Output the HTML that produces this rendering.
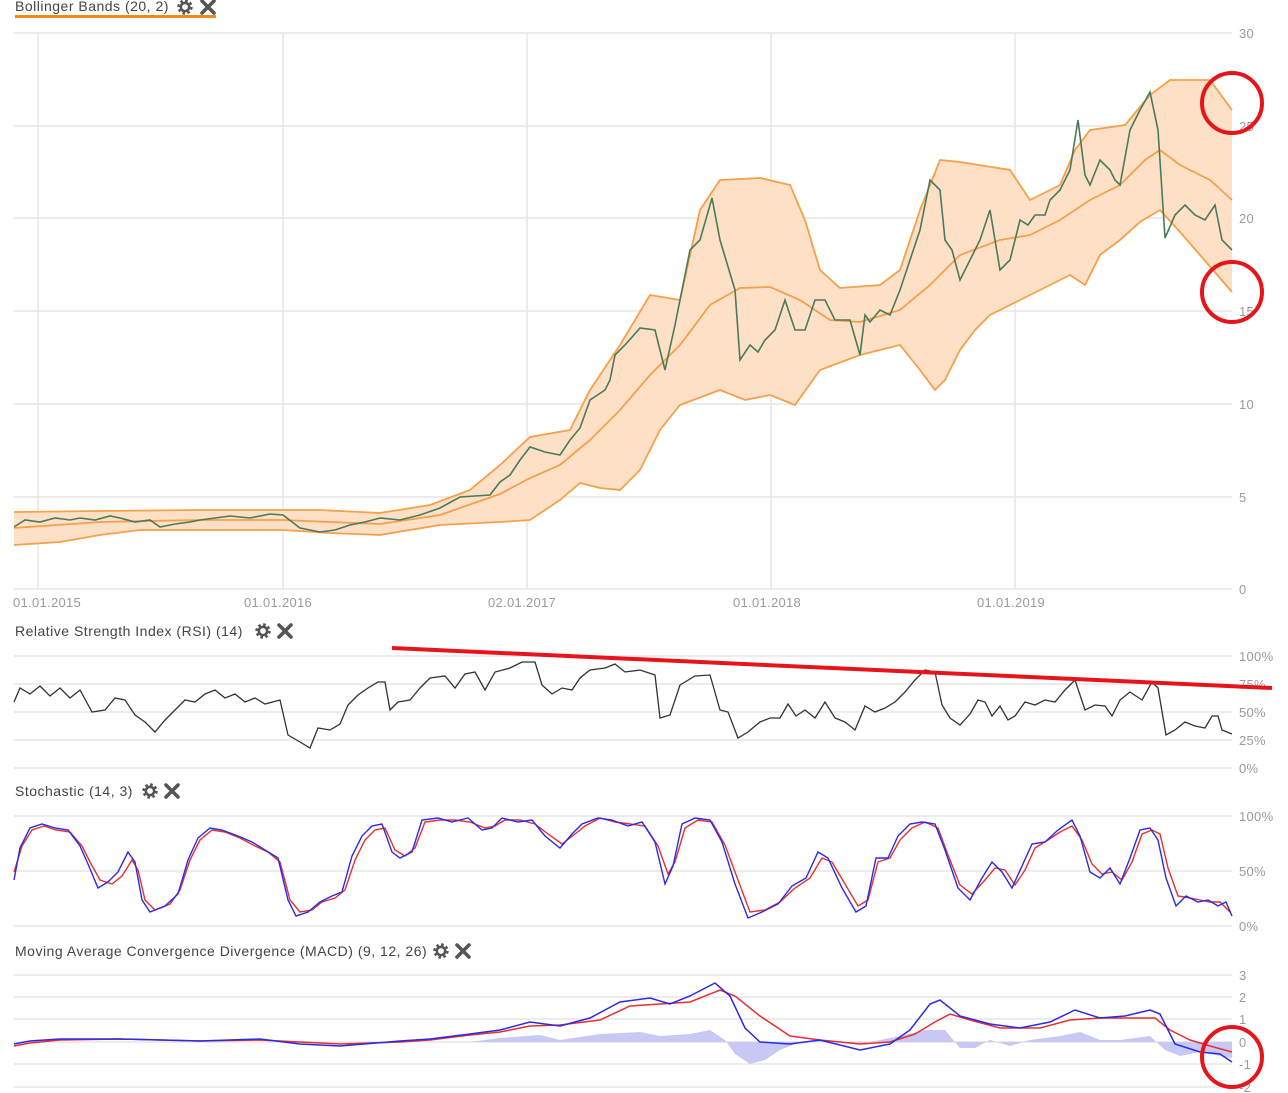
<!DOCTYPE html>
<html><head><meta charset="utf-8"><style>
body{margin:0;background:#fff;width:1288px;height:1093px;overflow:hidden;font-family:"Liberation Sans","DejaVu Sans",sans-serif}
svg{position:absolute;left:0;top:0}
</style></head><body>
<svg width="1288" height="1093" viewBox="0 0 1288 1093" font-family="Liberation Sans, DejaVu Sans, sans-serif">
<defs>
<g id="gear"><circle cx="0" cy="0" r="6" fill="none" stroke="#555" stroke-width="3.4" stroke-dasharray="2.4 2.3"/><circle cx="0" cy="0" r="4.2" fill="none" stroke="#555" stroke-width="2.6"/></g>
<g id="xx"><path d="M-6,-6 L6,6 M6,-6 L-6,6" stroke="#555" stroke-width="3.6" stroke-linecap="round"/></g>
</defs>
<g stroke="#e6e6e6" stroke-width="1.5">
<line x1="14" y1="33" x2="1232" y2="33"/><line x1="14" y1="126" x2="1232" y2="126"/><line x1="14" y1="218" x2="1232" y2="218"/><line x1="14" y1="311" x2="1232" y2="311"/><line x1="14" y1="404" x2="1232" y2="404"/><line x1="14" y1="497" x2="1232" y2="497"/><line x1="14" y1="589" x2="1232" y2="589"/>
<line x1="38" y1="33" x2="38" y2="589"/><line x1="283" y1="33" x2="283" y2="589"/><line x1="527" y1="33" x2="527" y2="589"/><line x1="771" y1="33" x2="771" y2="589"/><line x1="1015" y1="33" x2="1015" y2="589"/>
<line x1="14" y1="656" x2="1232" y2="656"/><line x1="14" y1="684" x2="1232" y2="684"/><line x1="14" y1="712" x2="1232" y2="712"/><line x1="14" y1="740" x2="1232" y2="740"/><line x1="14" y1="768" x2="1232" y2="768"/>
<line x1="14" y1="816" x2="1232" y2="816"/><line x1="14" y1="871" x2="1232" y2="871"/><line x1="14" y1="926" x2="1232" y2="926"/>
<line x1="14" y1="975" x2="1232" y2="975"/><line x1="14" y1="997" x2="1232" y2="997"/><line x1="14" y1="1019" x2="1232" y2="1019"/><line x1="14" y1="1042" x2="1232" y2="1042"/><line x1="14" y1="1064" x2="1232" y2="1064"/><line x1="14" y1="1087" x2="1232" y2="1087"/>
</g>
<g fill="#9a9a9a" font-size="13" letter-spacing="0.3">
<text x="1239" y="38">30</text><text x="1239" y="131">25</text><text x="1239" y="223">20</text><text x="1239" y="316">15</text><text x="1239" y="409">10</text><text x="1239" y="502">5</text><text x="1239" y="594">0</text>
<text x="13" y="607">01.01.2015</text><text x="244" y="607">01.01.2016</text><text x="488" y="607">02.01.2017</text><text x="733" y="607">01.01.2018</text><text x="977" y="607">01.01.2019</text>
<text x="1239" y="661">100%</text><text x="1239" y="689">75%</text><text x="1239" y="717">50%</text><text x="1239" y="745">25%</text><text x="1239" y="773">0%</text>
<text x="1239" y="821">100%</text><text x="1239" y="876">50%</text><text x="1239" y="931">0%</text>
<text x="1239" y="980">3</text><text x="1239" y="1002">2</text><text x="1239" y="1024">1</text><text x="1239" y="1047">0</text><text x="1239" y="1069">-1</text><text x="1239" y="1092">-2</text>
</g>
<g fill="#444" font-size="14" letter-spacing="0.5">
<text x="15" y="11">Bollinger Bands (20, 2)</text>
<text x="15" y="636">Relative Strength Index (RSI) (14)</text>
<text x="15" y="796">Stochastic (14, 3)</text>
<text x="15" y="956">Moving Average Convergence Divergence (MACD) (9, 12, 26)</text>
</g>
<rect x="15" y="15" width="201" height="3" fill="#f08a1a"/>
<use href="#gear" x="185" y="7"/><use href="#xx" x="208" y="7"/>
<use href="#gear" x="263" y="631"/><use href="#xx" x="285" y="631"/>
<use href="#gear" x="150" y="791"/><use href="#xx" x="172" y="791"/>
<use href="#gear" x="441" y="951"/><use href="#xx" x="463" y="951"/>
<path fill="#fde0c6" stroke="none" d="M14,512 L100,511 L200,510 L283,510 L320,510 L380,513 L430,505 L470,490 L500,465 L530,437 L570,430 L590,390 L620,345 L650,295 L680,300 L700,210 L720,180 L760,178 L790,185 L805,220 L820,270 L840,288 L880,285 L900,270 L920,210 L940,160 L960,162 L1010,170 L1030,200 L1060,185 L1075,150 L1090,130 L1125,125 L1150,95 L1170,80 L1210,80 L1232,110 L1232,292 L1200,255 L1180,232 L1160,210 L1140,222 L1120,240 L1100,255 L1085,285 L1070,275 L1040,290 L1020,300 L990,315 L975,330 L960,350 L945,380 L935,390 L920,370 L900,345 L860,355 L820,370 L795,405 L770,395 L745,400 L720,390 L680,405 L660,430 L640,470 L620,490 L600,488 L580,483 L560,500 L530,520 L500,522 L440,525 L380,535 L330,533 L283,530 L140,530 L100,535 L60,542 L14,545 Z"/>
<g fill="none" stroke="#f5a04a" stroke-width="1.8">
<path d="M14,512 L100,511 L200,510 L283,510 L320,510 L380,513 L430,505 L470,490 L500,465 L530,437 L570,430 L590,390 L620,345 L650,295 L680,300 L700,210 L720,180 L760,178 L790,185 L805,220 L820,270 L840,288 L880,285 L900,270 L920,210 L940,160 L960,162 L1010,170 L1030,200 L1060,185 L1075,150 L1090,130 L1125,125 L1150,95 L1170,80 L1210,80 L1232,110"/>
<path d="M14,545 L60,542 L100,535 L140,530 L283,530 L330,533 L380,535 L440,525 L500,522 L530,520 L560,500 L580,483 L600,488 L620,490 L640,470 L660,430 L680,405 L720,390 L745,400 L770,395 L795,405 L820,370 L860,355 L900,345 L920,370 L935,390 L945,380 L960,350 L975,330 L990,315 L1020,300 L1040,290 L1070,275 L1085,285 L1100,255 L1120,240 L1140,222 L1160,210 L1180,232 L1200,255 L1232,292"/>
<path d="M14,528 L100,522 L200,520 L283,520 L330,522 L380,524 L440,515 L500,494 L530,478 L560,465 L590,440 L620,410 L650,375 L680,345 L710,305 L740,288 L770,287 L800,300 L830,320 L860,322 L900,310 L930,285 L960,255 L1000,240 L1030,235 L1060,220 L1090,200 L1120,185 L1145,160 L1160,150 L1180,165 L1210,180 L1232,200"/>
</g>
<path fill="none" stroke="#4a7a5a" stroke-width="1.6" d="M14,527 L25,520 L40,522 L55,518 L70,520 L80,518 L95,520 L110,516 L120,518 L135,522 L150,520 L160,527 L175,524 L190,522 L200,520 L215,518 L230,516 L250,518 L270,514 L283,515 L300,528 L320,532 L335,530 L350,525 L365,522 L380,518 L400,520 L420,515 L440,508 L460,497 L490,495 L500,482 L510,475 L520,460 L530,447 L545,452 L560,455 L570,440 L580,428 L590,400 L605,390 L610,380 L615,355 L625,345 L640,328 L655,330 L665,370 L675,325 L680,300 L690,250 L700,240 L712,198 L720,240 L735,290 L740,360 L750,345 L758,352 L765,340 L775,330 L785,300 L795,330 L805,330 L815,300 L825,300 L835,320 L850,320 L860,355 L865,315 L870,322 L880,310 L890,315 L900,290 L910,260 L920,230 L930,180 L940,190 L945,240 L952,250 L960,280 L970,260 L980,240 L990,210 L1000,270 L1010,260 L1020,220 L1028,225 L1035,215 L1045,215 L1050,200 L1060,190 L1070,170 L1078,120 L1085,175 L1090,185 L1100,160 L1110,170 L1115,180 L1120,185 L1130,130 L1140,110 L1150,92 L1158,130 L1165,238 L1175,215 L1185,205 L1195,215 L1205,220 L1215,205 L1222,240 L1232,250"/>
<path fill="none" stroke="#333" stroke-width="1.3" d="M14,702 L20,688 L30,694 L40,686 L50,696 L60,688 L70,698 L80,690 L92,712 L105,710 L115,698 L125,700 L135,715 L145,722 L155,732 L165,720 L175,710 L185,700 L195,702 L205,694 L215,690 L225,698 L235,694 L245,702 L255,698 L265,704 L280,700 L288,735 L300,742 L310,748 L318,728 L330,730 L340,724 L348,705 L358,695 L368,688 L378,682 L385,682 L390,710 L398,702 L410,700 L420,688 L430,678 L445,676 L455,688 L465,674 L475,672 L485,690 L495,672 L510,668 L522,662 L535,662 L542,685 L552,694 L562,688 L572,690 L580,678 L590,670 L605,668 L615,664 L625,672 L640,670 L655,675 L660,718 L670,715 L680,685 L695,676 L710,675 L720,710 L728,712 L738,738 L748,732 L760,722 L770,718 L780,718 L788,704 L796,716 L805,710 L815,718 L825,702 L835,718 L845,722 L855,730 L865,706 L875,712 L885,708 L895,702 L905,692 L915,680 L925,670 L935,672 L942,705 L950,718 L960,725 L970,714 L978,700 L985,702 L992,716 L1000,706 L1008,720 L1015,716 L1025,702 L1035,705 L1045,700 L1055,702 L1065,690 L1075,680 L1085,710 L1095,705 L1105,706 L1112,716 L1120,700 L1130,692 L1142,700 L1152,682 L1158,688 L1166,735 L1175,730 L1185,722 L1195,726 L1205,728 L1212,716 L1218,716 L1222,730 L1232,734"/>
<line x1="392" y1="648" x2="1272" y2="688" stroke="#e8141c" stroke-width="4"/>
<path fill="none" stroke="#e63030" stroke-width="1.4" d="M14,872 L22,846 L32,830 L44,826 L56,830 L70,832 L82,846 L90,862 L100,880 L112,884 L122,876 L132,860 L138,870 L145,900 L155,910 L170,904 L180,890 L190,860 L200,840 L212,830 L225,832 L240,838 L255,846 L268,852 L280,862 L290,900 L300,912 L312,910 L322,902 L335,898 L345,890 L355,860 L365,840 L375,830 L385,828 L395,850 L405,856 L415,848 L425,822 L440,820 L455,820 L470,822 L485,828 L495,826 L505,820 L520,820 L535,824 L548,834 L562,844 L575,834 L585,826 L600,818 L615,822 L630,824 L645,826 L658,846 L668,874 L675,862 L685,828 L698,820 L712,822 L725,845 L738,880 L750,912 L765,910 L780,902 L795,888 L810,878 L822,858 L832,862 L845,884 L858,906 L868,900 L878,862 L890,858 L900,840 L912,828 L925,822 L938,828 L948,855 L960,885 L972,894 L985,880 L995,868 L1005,870 L1015,885 L1025,870 L1035,848 L1048,840 L1060,832 L1072,826 L1082,840 L1092,864 L1102,874 L1112,872 L1122,880 L1132,862 L1142,834 L1152,830 L1160,834 L1168,868 L1178,896 L1190,898 L1200,900 L1210,902 L1220,902 L1230,912"/>
<path fill="none" stroke="#2a2ae8" stroke-width="1.4" d="M14,880 L20,848 L30,828 L42,824 L55,828 L68,830 L80,846 L88,864 L98,888 L108,882 L118,872 L128,852 L135,862 L142,900 L150,912 L165,906 L178,894 L188,860 L198,838 L210,828 L222,830 L238,836 L252,842 L265,850 L278,858 L288,900 L296,916 L308,912 L320,902 L332,896 L342,892 L352,856 L362,836 L372,826 L382,824 L392,852 L400,858 L412,852 L422,820 L438,818 L452,822 L468,818 L482,830 L492,828 L502,818 L518,822 L532,820 L545,836 L560,848 L572,834 L582,824 L598,818 L612,820 L628,826 L642,822 L655,842 L665,884 L673,866 L682,824 L695,818 L710,820 L722,842 L735,884 L748,918 L762,912 L778,904 L792,886 L806,878 L818,852 L828,858 L842,888 L856,912 L866,906 L876,858 L888,858 L898,836 L910,824 L922,822 L935,824 L945,850 L958,888 L970,900 L982,878 L992,862 L1002,872 L1012,888 L1022,866 L1032,844 L1045,842 L1058,830 L1072,820 L1080,836 L1090,872 L1100,878 L1110,868 L1120,884 L1130,858 L1140,830 L1150,828 L1158,840 L1166,878 L1176,906 L1186,896 L1198,902 L1208,900 L1218,906 L1226,902 L1232,916"/>
<path fill="#c8c8f4" d="M470,1042 L500,1038 L540,1035 L560,1040 L600,1034 L640,1032 L660,1036 L690,1034 L710,1030 L725,1040 L735,1054 L750,1064 L765,1060 L780,1050 L795,1044 L820,1040 L860,1044 L880,1040 L900,1036 L925,1030 L945,1030 L960,1048 L975,1048 L990,1040 L1010,1046 L1030,1040 L1060,1036 L1080,1032 L1100,1040 L1120,1040 L1150,1036 L1165,1050 L1180,1056 L1200,1052 L1220,1056 L1232,1058 L1232,1042 Z"/>
<path fill="none" stroke="#e63030" stroke-width="1.5" d="M14,1046 L30,1043 L60,1040 L120,1039 L200,1041 L260,1040 L300,1042 L340,1044 L400,1042 L430,1040 L470,1035 L500,1032 L530,1026 L560,1025 L600,1020 L630,1006 L660,1004 L690,1002 L720,990 L735,996 L760,1016 L790,1036 L820,1040 L860,1044 L890,1042 L915,1034 L935,1022 L950,1014 L970,1020 L1000,1028 L1040,1028 L1070,1020 L1100,1018 L1130,1018 L1155,1018 L1170,1030 L1190,1040 L1210,1046 L1232,1052"/>
<path fill="none" stroke="#2a2ae8" stroke-width="1.5" d="M14,1044 L30,1041 L60,1039 L120,1039 L200,1041 L260,1039 L300,1044 L340,1046 L400,1041 L430,1039 L470,1034 L500,1030 L530,1022 L560,1026 L590,1018 L620,1002 L650,998 L670,1004 L690,996 L715,983 L730,996 L745,1028 L760,1042 L790,1044 L820,1040 L860,1050 L890,1044 L910,1030 L930,1004 L940,1000 L960,1016 L990,1024 L1020,1028 L1050,1022 L1075,1010 L1100,1018 L1125,1016 L1150,1010 L1160,1014 L1175,1044 L1200,1052 L1220,1054 L1232,1062"/>
<g fill="none" stroke="#e8141c" stroke-width="4">
<circle cx="1232" cy="103" r="30"/><circle cx="1232" cy="292" r="30"/><circle cx="1232" cy="1057" r="30"/>
</g>
</svg>
</body></html>
